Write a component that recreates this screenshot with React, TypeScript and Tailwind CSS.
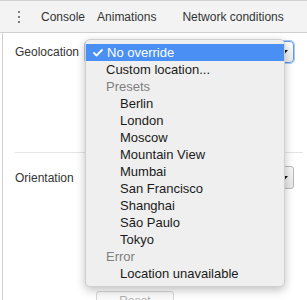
import { Check } from 'lucide-react';

type MenuRow = { label: string; kind: 'selected' | 'item' | 'header' | 'sub' };

const rows: MenuRow[] = [
  { label: 'No override', kind: 'selected' },
  { label: 'Custom location...', kind: 'item' },
  { label: 'Presets', kind: 'header' },
  { label: 'Berlin', kind: 'sub' },
  { label: 'London', kind: 'sub' },
  { label: 'Moscow', kind: 'sub' },
  { label: 'Mountain View', kind: 'sub' },
  { label: 'Mumbai', kind: 'sub' },
  { label: 'San Francisco', kind: 'sub' },
  { label: 'Shanghai', kind: 'sub' },
  { label: 'São Paulo', kind: 'sub' },
  { label: 'Tokyo', kind: 'sub' },
  { label: 'Error', kind: 'header' },
  { label: 'Location unavailable', kind: 'sub' },
];

const SelectArrow = () => (
  <svg width="7" height="4" viewBox="0 0 7 4" className="absolute right-[5px] top-1/2 -translate-y-1/2">
    <path d="M0 0h7L3.5 4z" fill="#111" />
  </svg>
);

const LocationMenu = () => (
  <div className="absolute left-[85px] top-[39px] w-[200px] py-[4px] bg-[#efefef] rounded-[5px] border border-[#cfcfcf] shadow-[0_3px_10px_rgba(0,0,0,0.25)] text-[13px] leading-[17px]">
    {rows.map((row) => {
      if (row.kind === 'selected') {
        return (
          <div key={row.label} className="h-[17px] flex items-center bg-[#4a8ff4] text-white">
            <Check size={12} strokeWidth={3.6} className="ml-[6px] mr-[3px]" />
            <span>{row.label}</span>
          </div>
        );
      }
      return (
        <div
          key={row.label}
          className={
            row.kind === 'header'
              ? 'h-[17px] pl-[20px] text-[#7f7f7f]'
              : row.kind === 'sub'
              ? 'h-[17px] pl-[34px] text-[#1a1a1a]'
              : 'h-[17px] pl-[20px] text-[#1a1a1a]'
          }
        >
          {row.label}
        </div>
      );
    })}
  </div>
);

export default function App() {
  return (
    <div className="relative w-[307px] h-[300px] overflow-hidden bg-white font-['Liberation_Sans',Arial,sans-serif] text-[12px] text-[#222]">
      {/* toolbar */}
      <div className="h-[33px] flex items-center bg-[#f3f3f3] border-t border-b border-[#d0d0d0]">
        <div className="ml-[18px] flex flex-col gap-[3px]">
          <span className="w-[2px] h-[2px] bg-[#555] rounded-full" />
          <span className="w-[2px] h-[2px] bg-[#555] rounded-full" />
          <span className="w-[2px] h-[2px] bg-[#555] rounded-full" />
        </div>
        <span className="ml-[21px] text-[#333]">Console</span>
        <span className="ml-[12px] text-[#333]">Animations</span>
        <span className="ml-[26px] text-[#333]">Network conditions</span>
      </div>

      {/* panel */}
      <div className="ml-[2px] h-[267px] border-l border-[#cfcfcf] pl-[12px] pt-[8px]">
        <div className="flex items-center h-[22px]">
          <span className="w-[70px] text-[#333]">Geolocation</span>
          <div className="relative w-[209px] h-[22px] rounded-[4px] border border-[#5c9cf3] ring-1 ring-[#a9c9f6] bg-gradient-to-b from-white to-[#ececec]">
            <SelectArrow />
          </div>
        </div>

        <div className="mt-[89px] mr-[4px] border-t border-[#e4e4e4]" />

        <div className="mt-[13px] flex items-center h-[23px]">
          <span className="w-[70px] text-[#333]">Orientation</span>
          <div className="relative w-[209px] h-[23px] rounded-[3px] border border-[#b8b8b8] bg-gradient-to-b from-[#f7f7f7] to-[#e8e8e8]">
            <SelectArrow />
          </div>
        </div>

        <div className="mt-[102px] ml-[81px] w-[78px] h-[20px] rounded-[3px] border border-[#d6d6d6] bg-[#fafafa] text-center text-[#b0b0b0] leading-[18px]">
          Reset
        </div>
      </div>

      <LocationMenu />
    </div>
  );
}
